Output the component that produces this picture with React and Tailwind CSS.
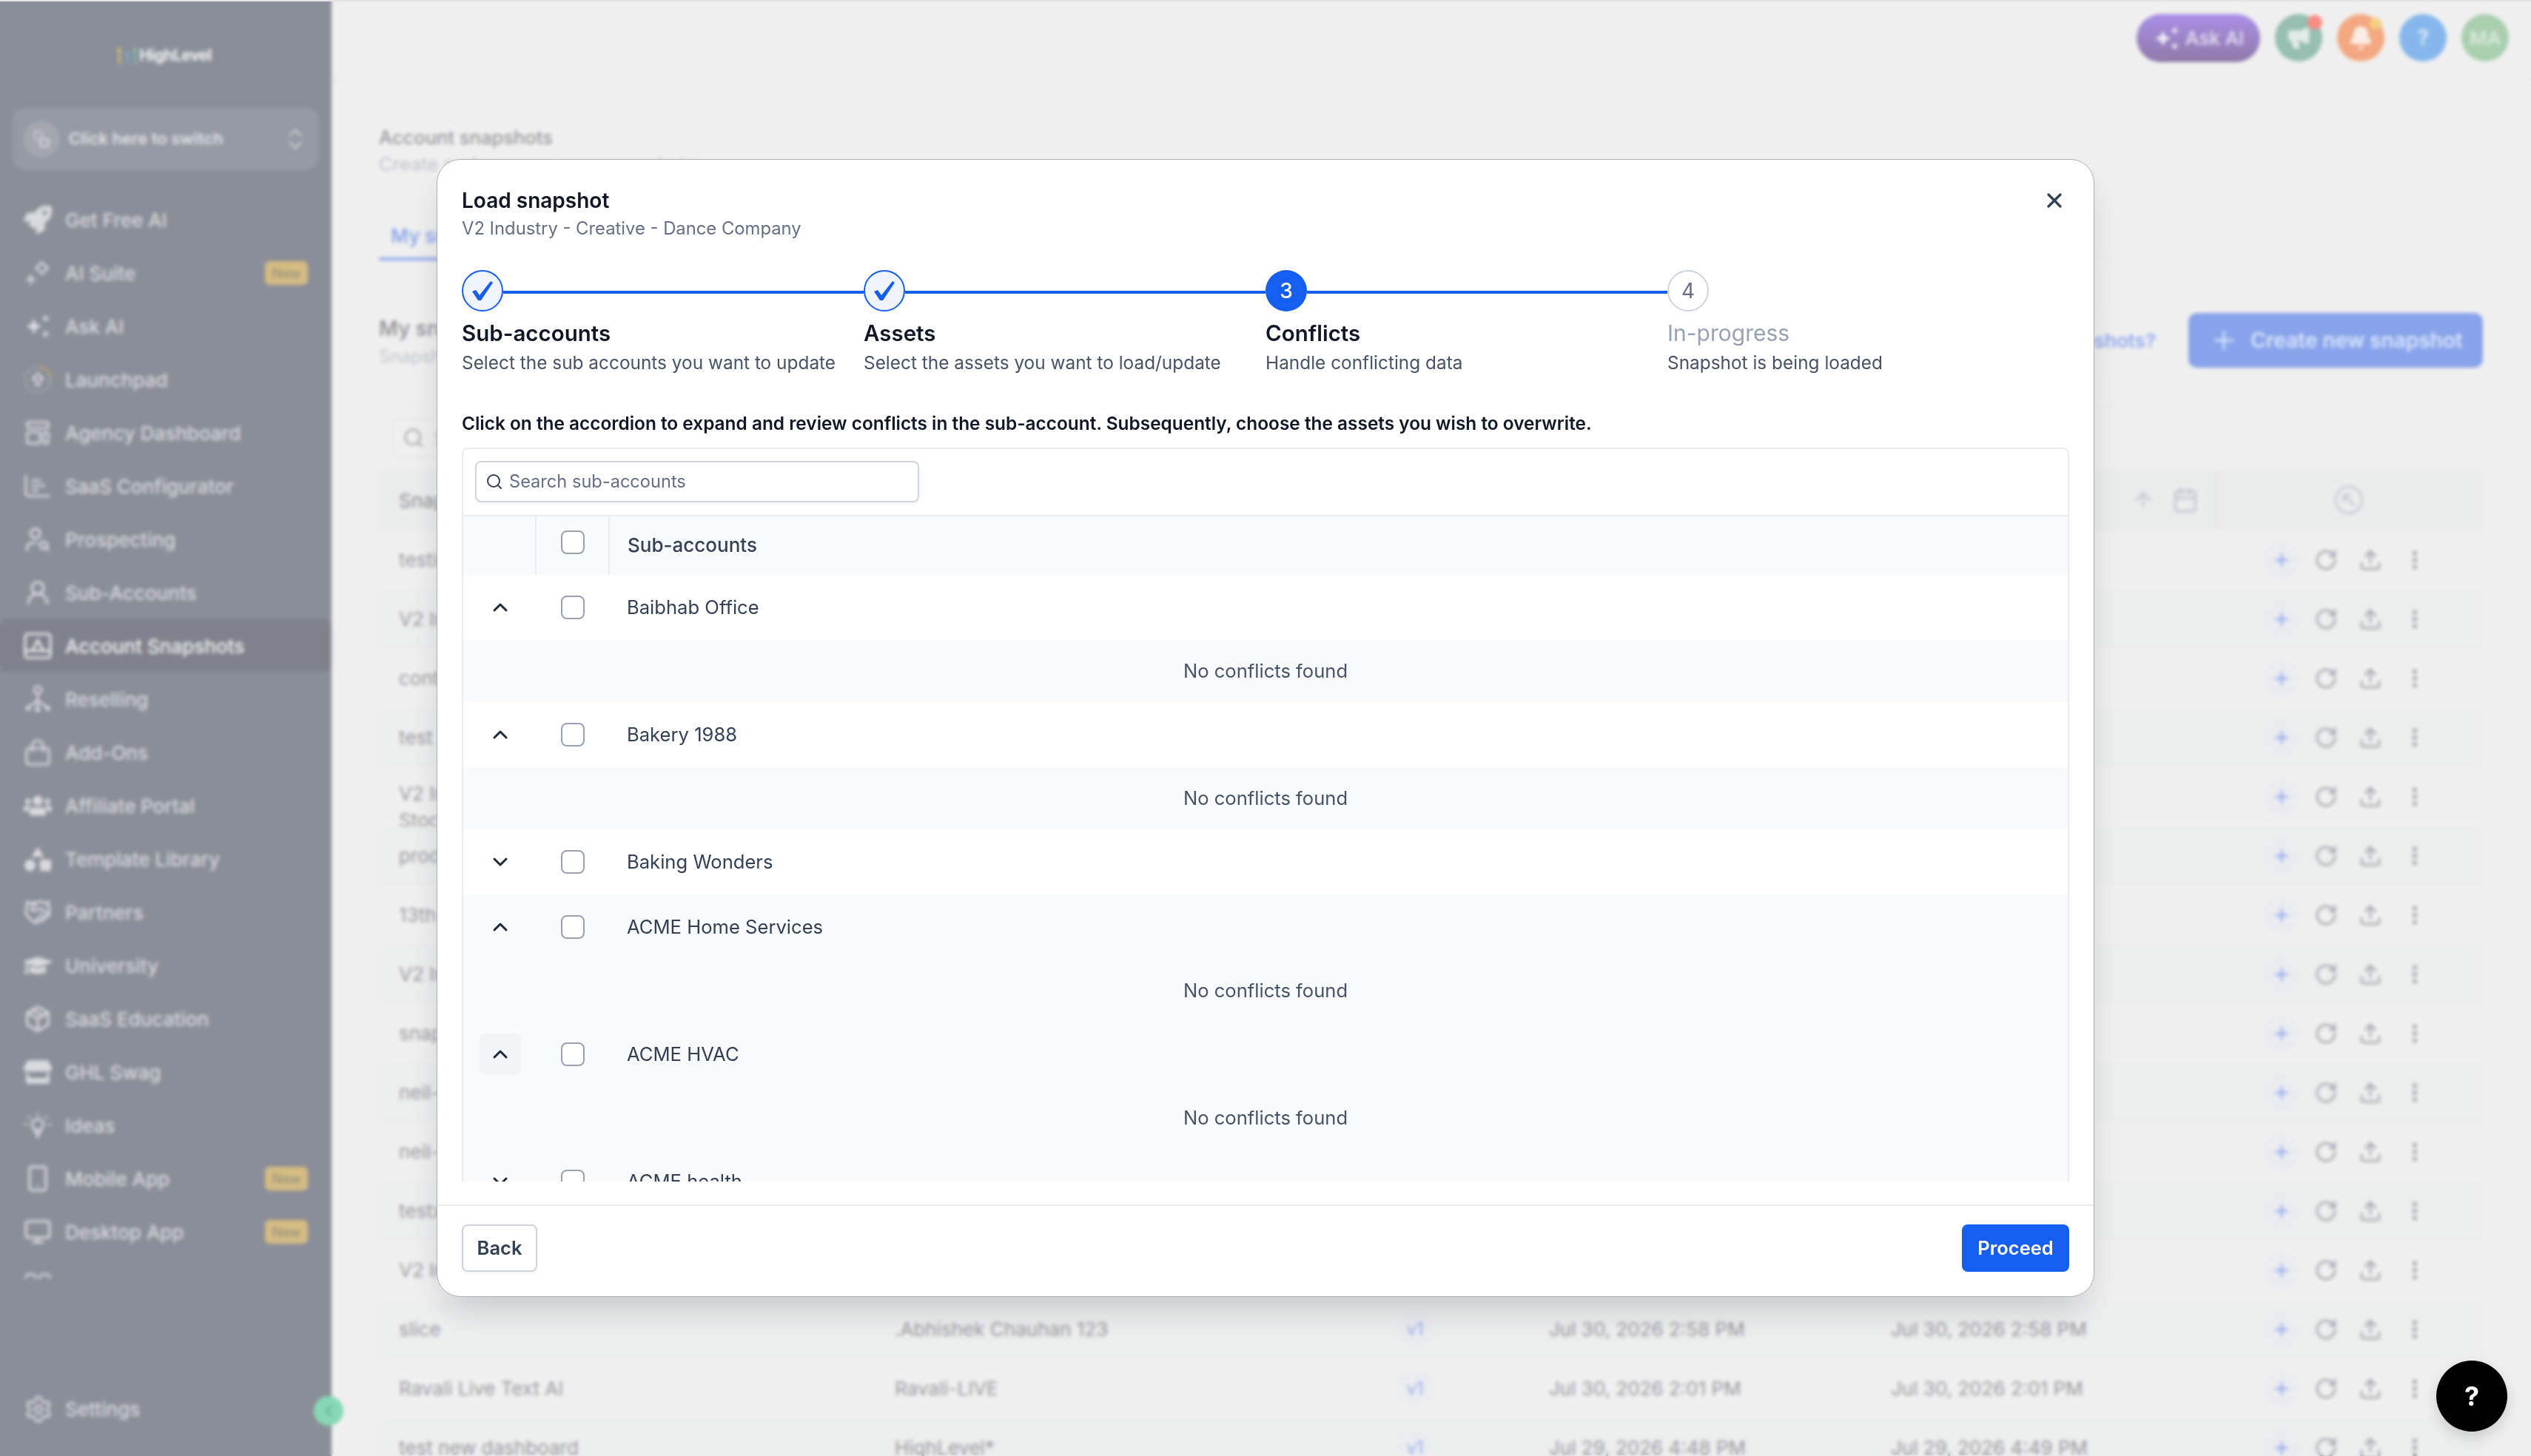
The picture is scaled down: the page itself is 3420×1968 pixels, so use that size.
import React from "react";
import {
  ArrowUp,
  Bell,
  Calendar,
  ChevronDown,
  ChevronLeft,
  ChevronUp,
  ChevronsUpDown,
  EllipsisVertical,
  Handshake,
  Megaphone,
  Monitor,
  Package,
  Plus,
  RotateCw,
  Search,
  Settings,
  Smartphone,
  Upload,
  UserRound,
  UserSearch,
  X,
} from "lucide-react";
import { FaGraduationCap, FaRocket, FaStore, FaUsers } from "react-icons/fa";

const Sparkles = ({ className }) => (
  <svg viewBox="0 0 36 36" fill="currentColor" className={className}>
    <path d="M13 8l3 7 7 3-7 3-3 7-3-7-7-3 7-3z" />
    <path d="M28 3l1.6 3.4L33 8l-3.4 1.6L28 13l-1.6-3.4L23 8l3.4-1.6z" />
    <path d="M28 23l1.6 3.4L33 28l-3.4 1.6L28 33l-1.6-3.4L23 28l3.4-1.6z" />
  </svg>
);

const SuiteIcon = ({ className }) => (
  <svg viewBox="0 0 40 40" fill="none" stroke="currentColor" strokeWidth="3" className={className}>
    <path d="M26 5l8 8-8 8-8-8z" />
    <path d="M10 22v14M3 29h14" />
  </svg>
);

const LaunchIcon = ({ className }) => (
  <svg viewBox="0 0 40 40" fill="none" className={className}>
    <circle cx="20" cy="20" r="18" stroke="currentColor" strokeOpacity="0.35" strokeWidth="2" />
    <path d="M20 2a18 18 0 0 1 18 16" stroke="#c4a27c" strokeWidth="2.5" />
    <path d="M20 11l8 8h-5v9h-6v-9h-5z" stroke="currentColor" strokeWidth="2.5" strokeLinejoin="round" />
  </svg>
);

const DashIcon = ({ className }) => (
  <svg viewBox="0 0 40 40" fill="none" stroke="currentColor" strokeWidth="3" className={className}>
    <rect x="5" y="5" width="30" height="8" rx="2" />
    <rect x="5" y="19" width="18" height="16" rx="2" />
    <rect x="28" y="19" width="7" height="16" rx="2" />
  </svg>
);

const ConfigIcon = ({ className }) => (
  <svg viewBox="0 0 40 40" fill="none" stroke="currentColor" strokeWidth="3" className={className}>
    <path d="M3 4v26a4 4 0 0 0 4 4h30" />
    <path d="M11 12h14M11 19h20M11 26h10" />
  </svg>
);

const SnapIcon = ({ className }) => (
  <svg viewBox="0 0 40 40" fill="none" stroke="currentColor" strokeWidth="3" className={className}>
    <rect x="2" y="3" width="36" height="34" rx="4" />
    <path d="M2 27h36M12 27l8-15 8 15" />
  </svg>
);

const TreeIcon = ({ className }) => (
  <svg viewBox="0 0 40 40" fill="none" stroke="currentColor" strokeWidth="3" className={className}>
    <circle cx="20" cy="7" r="5" />
    <path d="M20 12v24M20 22L6 32M20 22l14 10" />
    <circle cx="6" cy="33" r="2" fill="currentColor" />
    <circle cx="34" cy="33" r="2" fill="currentColor" />
    <circle cx="20" cy="35" r="2" fill="currentColor" />
  </svg>
);

const BagIcon = ({ className }) => (
  <svg viewBox="0 0 40 40" fill="none" stroke="currentColor" strokeWidth="3" className={className}>
    <rect x="4" y="14" width="32" height="23" rx="3" />
    <path d="M12 19v-8a8 8 0 0 1 16 0v8" />
  </svg>
);

const ShapesIcon = ({ className }) => (
  <svg viewBox="0 0 40 40" fill="currentColor" className={className}>
    <path d="M20 3l9 14H11z" />
    <circle cx="9" cy="29" r="8" />
    <rect x="23" y="21" width="16" height="16" rx="2" />
  </svg>
);

const BulbIcon = ({ className }) => (
  <svg viewBox="0 0 40 40" fill="none" stroke="currentColor" strokeWidth="3" className={className}>
    <circle cx="20" cy="19" r="8" />
    <path d="M15 26l5 10 5-10" />
    <path d="M20 2v5M6 7l4 4M34 7l-4 4M1 19h5M34 19h5" strokeWidth="2" />
  </svg>
);

const ArcsIcon = ({ className }) => (
  <svg viewBox="0 0 40 40" fill="none" stroke="currentColor" strokeWidth="3" className={className}>
    <path d="M2 12a8 8 0 0 1 16 0M22 12a8 8 0 0 1 16 0" />
  </svg>
);

const PointerCircle = ({ className }) => (
  <svg viewBox="0 0 40 40" fill="none" stroke="currentColor" strokeWidth="2.5" className={className}>
    <circle cx="20" cy="20" r="18" />
    <path d="M28 28L13 13M13 23V13h10" />
  </svg>
);

const NAV = [
  { label: "Get Free AI", icon: FaRocket },
  { label: "AI Suite", icon: SuiteIcon, badge: true },
  { label: "Ask AI", icon: Sparkles },
  { label: "Launchpad", icon: LaunchIcon },
  { label: "Agency Dashboard", icon: DashIcon },
  { label: "SaaS Configurator", icon: ConfigIcon },
  { label: "Prospecting", icon: UserSearch },
  { label: "Sub-Accounts", icon: UserRound },
  { label: "Account Snapshots", icon: SnapIcon, active: true },
  { label: "Reselling", icon: TreeIcon },
  { label: "Add-Ons", icon: BagIcon },
  { label: "Affiliate Portal", icon: FaUsers },
  { label: "Template Library", icon: ShapesIcon },
  { label: "Partners", icon: Handshake },
  { label: "University", icon: FaGraduationCap },
  { label: "SaaS Education", icon: Package },
  { label: "GHL Swag", icon: FaStore },
  { label: "Ideas", icon: BulbIcon },
  { label: "Mobile App", icon: Smartphone, badge: true },
  { label: "Desktop App", icon: Monitor, badge: true },
  { label: "", icon: ArcsIcon },
];

const SNAPSHOTS = [
  { name: "testing", owner: "HighLevel*", date: "Aug 3, 2026 2:12 PM" },
  { name: "V2 Industry - Creative", owner: "HighLevel*", date: "Aug 3, 2026 1:40 PM" },
  { name: "content", owner: "HighLevel*", date: "Jul 31, 2026 11:58 PM" },
  { name: "test", owner: "HighLevel*", date: "Jul 31, 2026 10:00" },
  { name: "V2 Industry", second: "Stock", owner: "HighLevel*", date: "Jul 31, 2026 9:48 AM" },
  { name: "product", owner: "HighLevel*", date: "Jul 31, 2026 9:12 AM" },
  { name: "13th", owner: "HighLevel*", date: "Jul 30, 2026 8:20 PM" },
  { name: "V2 Industry", owner: "HighLevel*", date: "Jul 30, 2026 7:14 PM" },
  { name: "snapshot", owner: "HighLevel*", date: "Jul 30, 2026 6:30 PM" },
  { name: "neil-test", owner: "HighLevel*", date: "Jul 30, 2026 5:48 PM" },
  { name: "neil-test2", owner: "HighLevel*", date: "Jul 30, 2026 5:31 PM" },
  { name: "testx", owner: "HighLevel*", date: "Jul 30, 2026 4:10 PM" },
  { name: "V2 Industry", owner: "HighLevel*", date: "Jul 30, 2026 3:22 PM" },
  { name: "slice", owner: ".Abhishek Chauhan 123", date: "Jul 30, 2026 2:58 PM", first: "Jul 30, 2026 2:58 PM" },
  { name: "Ravali Live Text AI", owner: "Ravali-LIVE", date: "Jul 30, 2026 2:01 PM", first: "Jul 30, 2026 2:01 PM" },
  { name: "test new dashboard", owner: "HighLevel*", date: "Jul 29, 2026 4:49 PM", first: "Jul 29, 2026 4:48 PM" },
];

const STEPS = [
  { title: "Sub-accounts", desc: "Select the sub accounts you want to update", state: "done" },
  { title: "Assets", desc: "Select the assets you want to load/update", state: "done" },
  { title: "Conflicts", desc: "Handle conflicting data", state: "current", n: 3 },
  { title: "In-progress", desc: "Snapshot is being loaded", state: "todo", n: 4 },
];

const ACCOUNTS = [
  { name: "Baibhab Office", open: true },
  { name: "Bakery 1988", open: true },
  { name: "Baking Wonders" },
  { name: "ACME Home Services", open: true, tint: true },
  { name: "ACME HVAC", open: true, tint: true, hover: true },
  { name: "ACME health", tint: true },
];

const NewBadge = () => (
  <span className="ml-auto mr-[32px] flex h-[32px] w-[58px] items-center justify-center rounded-[6px] bg-[#d4bb82] text-[18px] font-medium text-[#9d9480]">
    New
  </span>
);

const Sidebar = () => (
  <aside className="flex h-full w-[448px] shrink-0 flex-col bg-[#8a8e98]">
    <div className="flex h-[146px] items-start justify-center pr-[4px] pt-[60px]">
      <div className="flex items-center gap-[2px]">
        <svg viewBox="0 0 24 22" className="h-[30px] w-[28px]">
          <path d="M2 21V6H0l3-5 3 5H4v15z" fill="#e2c766" />
          <path d="M11 21V11H9l3-5 3 5h-2v10z" fill="#78aee0" />
          <path d="M20 21V6h-2l3-5 3 5h-2v15z" fill="#7fc49a" />
        </svg>
        <span className="text-[21px] leading-[28px] font-bold tracking-[-0.5px] text-[#f0f1f3]">HighLevel</span>
      </div>
    </div>
    <div className="mx-[17px] flex h-[83px] items-center rounded-[16px] bg-[#969aa4] pl-[14px] pr-[14px]">
      <span className="flex h-[50px] w-[50px] items-center justify-center rounded-full bg-[#a3a6af]">
        <svg viewBox="0 0 24 24" fill="none" stroke="#e2e3e6" strokeWidth="2" className="h-[26px] w-[26px]">
          <rect x="3" y="3" width="10" height="9" rx="2" strokeDasharray="3 2" />
          <rect x="11" y="12" width="10" height="9" rx="2" />
        </svg>
      </span>
      <span className="ml-[12px] text-[22px] font-semibold text-[#e2e3e6]">Click here to switch</span>
      <ChevronsUpDown className="ml-auto h-[36px] w-[36px] text-[#d2d4d8]" strokeWidth={1.5} />
    </div>
    <nav className="mt-[32px] h-[1467px] shrink-0 overflow-hidden">
      {NAV.map((item, i) => {
        const Icon = item.icon;
        return (
          <div
            key={i}
            className={`flex h-[72px] items-center pl-[32px] text-[26px] font-medium ${
              item.active ? "rounded-[10px] bg-[#7f828c] text-[#f2f2f3]" : "text-[#d8dadd]"
            }`}
          >
            <Icon className="h-[38px] w-[38px] shrink-0" />
            <span className="ml-[18px]">{item.label}</span>
            {item.badge && <NewBadge />}
          </div>
        );
      })}
    </nav>
    <div className="relative flex flex-1 items-start pl-[32px] pt-[157px] text-[26px] font-medium text-[#d8dadd]">
      <Settings className="h-[40px] w-[40px]" strokeWidth={1.7} />
      <span className="ml-[16px] leading-[40px]">Settings</span>
      <span className="absolute left-[424px] top-[159px] flex h-[40px] w-[40px] items-center justify-center rounded-full bg-[#86d9b4]">
        <ChevronLeft className="h-[26px] w-[26px] text-[#67a78c]" />
      </span>
    </div>
  </aside>
);

const TopBar = () => (
  <header className="flex h-[109px] shrink-0 items-start justify-end gap-[20px] border-b-4 border-[#ebebeb] pr-[30px] pt-[19px]">
    <div className="flex h-[65px] w-[167px] items-center justify-center gap-[6px] rounded-full bg-gradient-to-b from-[#ab8fe9] to-[#8e79a8] text-[26px] font-medium text-[#e6e1f3]">
      <Sparkles className="h-[38px] w-[38px] text-[#f2eff8]" />
      Ask AI
    </div>
    <div className="relative flex h-[64px] w-[64px] items-center justify-center rounded-full bg-[#95bfb0]">
      <Megaphone className="h-[34px] w-[34px] fill-[#e2ece8] text-[#e2ece8]" />
      <span className="absolute left-[44px] top-[1px] h-[20px] w-[20px] rounded-full bg-[#f98c84]" />
    </div>
    <div className="relative flex h-[64px] w-[64px] items-center justify-center rounded-full bg-[#f4a880]">
      <Bell className="h-[34px] w-[34px] fill-[#fbeee6] text-[#fbeee6]" />
      <span className="absolute left-[44px] top-[5px] h-[16px] w-[16px] rounded-full bg-[#f3d080]" />
    </div>
    <div className="flex h-[64px] w-[64px] items-center justify-center rounded-full bg-[#86b7ec] text-[28px] font-semibold text-[#e4eefa]">?</div>
    <div className="flex h-[64px] w-[64px] items-center justify-center rounded-full bg-[#a9cfaf] text-[26px] font-medium text-[#e0ede3]">MA</div>
  </header>
);

const SnapshotRow = ({ row, striped }) => (
  <div className={`flex h-[80px] shrink-0 overflow-hidden text-[26px] text-[#98999d] ${striped ? "bg-[#edeeee]" : ""}`}>
    <div className={`w-[695px] shrink-0 pl-[25px] leading-[36px] ${row.second ? "pt-[18px]" : "pt-[22px]"}`}>
      <div>{row.name}</div>
      {row.second && <div>{row.second}</div>}
    </div>
    <div className="w-[677px] shrink-0 pt-[22px] leading-[36px]">{row.owner}</div>
    <div className="flex w-[207px] shrink-0 pt-[17px]">
      <span className="flex h-[46px] w-[52px] items-center justify-center rounded-full bg-[#ebecf0] text-[24px] text-[#98aeee]">v1</span>
    </div>
    <div className="w-[462px] shrink-0 pt-[22px] leading-[36px]">{row.first || row.date}</div>
    <div className="w-[504px] shrink-0 pt-[22px] leading-[36px]">{row.date}</div>
    <div className="flex items-center">
      <span className="flex h-[50px] w-[48px] items-center justify-center rounded-full bg-[#ebecf0]">
        <Plus className="h-[26px] w-[26px] text-[#8fa8ec]" strokeWidth={2.4} />
      </span>
      <RotateCw className="ml-[20px] h-[32px] w-[32px] text-[#a9abaf]" strokeWidth={2.2} />
      <Upload className="ml-[28px] h-[32px] w-[32px] text-[#a9abaf]" strokeWidth={2.2} />
      <EllipsisVertical className="ml-[28px] h-[32px] w-[32px] text-[#a0a2a6]" strokeWidth={2.4} />
    </div>
  </div>
);

const MainPage = () => (
  <main className="flex h-full min-w-0 flex-1 flex-col overflow-hidden bg-[#f0f0f0]">
    <TopBar />
    <div className="flex min-h-0 flex-1 flex-col pl-[64px] pr-[65px] pt-[59px]">
      <h1 className="text-[25.5px] leading-[36px] font-medium text-[#98999c]">Account snapshots</h1>
      <p className="text-[25.5px] leading-[36px] text-[#c2c5cc]">Create and manage your snapshots</p>
      <div className="mt-[61px] flex border-b-2 border-[#ececec]">
        <span className="-mb-[2px] border-b-4 border-[#8fa8ec] px-[16px] pb-[11px] text-[26px] leading-[36px] font-semibold text-[#8fa8ec]">
          My snapshots
        </span>
      </div>
      <div className="mt-[71px] flex shrink-0 items-start">
        <div className="mt-[3px]">
          <h2 className="text-[28px] leading-[36px] font-semibold text-[#98999c]">My snapshots</h2>
          <p className="mt-[2px] text-[24px] leading-[36px] text-[#c2c5cc]">Snapshots you have created</p>
        </div>
        <div className="ml-auto flex h-[74px] items-center rounded-[12px] border-2 border-[#ececec] px-[26px] text-[26px] font-semibold text-[#94aaf0]">
          What are snapshots?
        </div>
        <div className="ml-[16px] flex h-[74px] w-[398px] items-center rounded-[12px] bg-[#87a3ea] pl-[28px] text-[28px] font-semibold text-[#dbe4fb]">
          <Plus className="h-[40px] w-[40px]" strokeWidth={1.8} />
          <span className="ml-[16px]">Create new snapshot</span>
        </div>
      </div>
      <div className="mt-[47px] flex min-h-0 flex-1 flex-col rounded-t-[12px] border-x-2 border-t-2 border-[#ececec]">
        <div className="flex h-[86px] shrink-0 items-start pl-[16px] pt-[16px]">
          <div className="flex h-[54px] w-[560px] items-center rounded-[10px] border-2 border-[#e4e5e7] pl-[12px] text-[26px] text-[#c4c6cb]">
            <Search className="h-[30px] w-[30px] text-[#a9abaf]" />
            <span className="ml-[12px]">Search</span>
          </div>
        </div>
        <div className="flex h-[82px] shrink-0 items-center bg-[#ebecec] text-[26px] font-medium text-[#98999d]">
          <span className="w-[2366px] shrink-0 pl-[25px]">Snapshot name</span>
          <ArrowUp className="h-[32px] w-[32px] text-[#c3c5cb]" strokeWidth={2} />
          <Calendar className="ml-[23px] h-[36px] w-[36px] text-[#c3c5cb]" strokeWidth={2} />
          <span className="ml-[23px] h-full w-[2px] bg-[#e6e6e6]" />
          <PointerCircle className="ml-[158px] h-[40px] w-[40px] text-[#c3c5cb]" />
        </div>
        {SNAPSHOTS.map((row, i) => (
          <SnapshotRow key={i} row={row} striped={i % 2 === 1} />
        ))}
      </div>
    </div>
  </main>
);

const StepCircle = ({ step }) => {
  if (step.state === "done") {
    return (
      <span className="flex h-[56px] w-[56px] shrink-0 items-center justify-center rounded-full border-[2.5px] border-[#155eef] bg-[#eff4ff]">
        <svg viewBox="0 0 30 28" className="h-[28px] w-[30px]" fill="#155eef">
          <path d="M1 15l5-2 5 7L26 1l3 2-16 24h-4z" />
        </svg>
      </span>
    );
  }
  if (step.state === "current") {
    return (
      <span className="flex h-[56px] w-[56px] shrink-0 items-center justify-center rounded-full bg-[#155eef] text-[28px] font-medium text-white">
        {step.n}
      </span>
    );
  }
  return (
    <span className="flex h-[56px] w-[56px] shrink-0 items-center justify-center rounded-full border-2 border-[#d0d5dd] bg-white text-[28px] text-[#667085]">
      {step.n}
    </span>
  );
};

const Stepper = () => (
  <div className="mt-[38px] flex">
    {STEPS.map((step, i) => (
      <div key={step.title} className="w-[543px] shrink-0">
        <div className="flex items-center">
          <StepCircle step={step} />
          {i < 3 && <span className="mt-[4px] h-[4px] flex-1 bg-[#155eef]" />}
        </div>
        <div className={`mt-[9px] leading-[40px] ${step.state === "todo" ? "text-[30px] font-normal text-[#98a2b3]" : "text-[29.5px] font-semibold text-[#101828]"}`}>
          {step.title}
        </div>
        <div className="mt-[2px] text-[24.4px] leading-[36px] text-[#475467]">{step.desc}</div>
      </div>
    ))}
  </div>
);

const Checkbox = ({ className = "" }) => <span className={`block h-[32px] w-[32px] rounded-[8px] border-[2.5px] border-[#98a2b3] bg-white ${className}`} />;

const AccountRow = ({ account }) => {
  const Chevron = account.open ? ChevronUp : ChevronDown;
  return (
    <>
      <div className={`flex h-[88px] shrink-0 items-center text-[25.6px] text-[#344054] ${account.tint ? "bg-[#f9fafb]" : "bg-white"}`}>
        <div className="flex w-[99px] shrink-0 justify-center">
          <span className={`flex h-[56px] w-[56px] items-center justify-center rounded-[8px] ${account.hover ? "bg-[#f2f4f7]" : ""}`}>
            <Chevron className="h-[32px] w-[32px] text-[#1d2939]" strokeWidth={2.2} />
          </span>
        </div>
        <div className="flex w-[99px] shrink-0 justify-center">
          <Checkbox className="-ml-[2px]" />
        </div>
        <span className="ml-[23px]">{account.name}</span>
      </div>
      {account.open && (
        <div className="flex h-[84px] shrink-0 items-center justify-center bg-[#f9fafb] text-[25.6px] text-[#475467]">No conflicts found</div>
      )}
    </>
  );
};

const ConflictTable = () => (
  <div className="mt-[15px] flex h-[992px] flex-col overflow-hidden rounded-t-[8px] border-x-2 border-t-2 border-[#eaecf0]">
    <div className="flex h-[89px] shrink-0 items-start pl-[16px] pt-[16px]">
      <div className="flex h-[56px] w-[600px] items-center rounded-[8px] border-2 border-[#d0d5dd] pl-[12px] text-[23.6px] text-[#667085] shadow-[0_2px_4px_rgba(16,24,40,0.05)]">
        <Search className="h-[24px] w-[24px] text-[#344054]" strokeWidth={2} />
        <span className="ml-[8px]">Search sub-accounts</span>
      </div>
    </div>
    <div className="flex h-[81px] shrink-0 items-center border-t-2 border-[#eaecf0] bg-[#f9fafb] text-[26px] font-medium text-[#344054]">
      <div className="h-full w-[99px] shrink-0 border-r-2 border-[#eaecf0]" />
      <div className="flex h-full w-[99px] shrink-0 items-center justify-center border-r-2 border-[#eaecf0]">
        <Checkbox className="mb-[10px]" />
      </div>
      <span className="mb-[3px] ml-[24px]">Sub-accounts</span>
    </div>
    {ACCOUNTS.map((a) => (
      <AccountRow key={a.name} account={a} />
    ))}
  </div>
);

const SnapshotModal = () => (
  <div className="flex h-[1538px] w-[2240px] flex-col rounded-[32px] border border-[#b0b0b0] bg-white shadow-[0_24px_48px_-12px_rgba(16,24,40,0.2)]">
    <div className="flex shrink-0 flex-col px-[33px] pt-[35px]">
      <div className="flex items-start justify-between">
        <div>
          <h2 className="text-[28px] leading-[40px] font-semibold text-[#101828]">Load snapshot</h2>
          <p className="text-[23.8px] leading-[36px] text-[#667085]">V2 Industry - Creative - Dance Company</p>
        </div>
        <X className="mr-[4px] mt-[4px] h-[32px] w-[32px] text-[#344054]" strokeWidth={2.5} />
      </div>
      <Stepper />
      <p className="mt-[46px] text-[24.4px] leading-[36px] font-semibold text-[#101828]">
        Click on the accordion to expand and review conflicts in the sub-account. Subsequently, choose the assets you wish to overwrite.
      </p>
      <ConflictTable />
    </div>
    <div className="mt-[31px] flex shrink-0 items-start justify-between border-t-2 border-[#eaecf0] px-[33px] pt-[25px]">
      <button className="h-[64px] w-[102px] rounded-[8px] border-2 border-[#d0d5dd] bg-white text-[25.5px] font-semibold text-[#344054] shadow-[0_2px_4px_rgba(16,24,40,0.05)]">
        Back
      </button>
      <button className="h-[64px] w-[145px] rounded-[8px] bg-[#155eef] text-[25.5px] font-semibold text-white">Proceed</button>
    </div>
  </div>
);

export default function App() {
  return (
    <div className="relative flex h-[1968px] w-[3420px] overflow-hidden [font-family:Inter,sans-serif]">
      <Sidebar />
      <MainPage />
      <div className="absolute inset-0 flex items-center justify-center backdrop-blur-[2.5px]">
        <div className="absolute inset-x-0 top-0 h-[2px] bg-[#e4e4e4]" />
        <SnapshotModal />
        <div className="absolute left-[3292px] top-[1839px] flex h-[96px] w-[96px] items-center justify-center rounded-full bg-black text-[36px] font-bold text-white shadow-[0_8px_20px_rgba(0,0,0,0.15)]">
          ?
        </div>
      </div>
    </div>
  );
}
